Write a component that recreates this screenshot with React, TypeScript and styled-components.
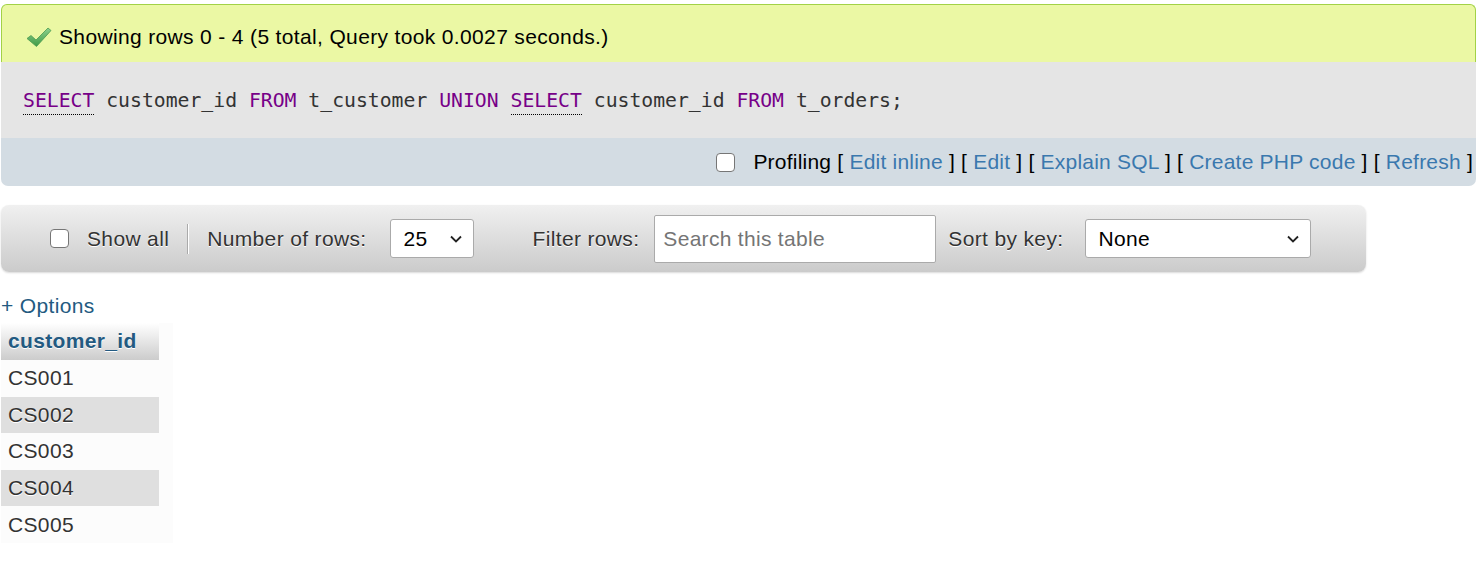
import React from "react";
import styled, { createGlobalStyle } from "styled-components";

const GlobalStyle = createGlobalStyle`
  html, body {
    margin: 0;
    padding: 0;
    background: #fff;
  }
  body {
    font-family: "Liberation Sans", Arial, sans-serif;
    font-size: 21px;
    letter-spacing: 0.35px;
    color: #000;
  }
`;

const Page = styled.div`
  padding: 4px 1px 0 1px;
`;

const ResultBlock = styled.div`
  width: 1475px;
`;

const SuccessBox = styled.div`
  box-sizing: border-box;
  height: 58px;
  display: flex;
  align-items: center;
  gap: 7px;
  padding: 7px 0 0 24px;
  background: #ebf8a4;
  border: 1px solid #a2d246;
  border-bottom: none;
  border-radius: 6px 6px 0 0;
`;

const SqlBox = styled.div`
  height: 76px;
  display: flex;
  align-items: center;
  padding-left: 22px;
  background: #e5e5e5;
  font-family: "DejaVu Sans Mono", "Liberation Mono", monospace;
  font-size: 19.75px;
  letter-spacing: 0;
  color: #333;
`;

const SqlText = styled.span`
  white-space: pre;
`;

const Keyword = styled.span<{ $doc?: boolean }>`
  color: #770088;
  ${(p) => (p.$doc ? "border-bottom: 1px dotted #000; padding-bottom: 2px;" : "")}
`;

const ToolsBar = styled.div`
  height: 48px;
  display: flex;
  align-items: center;
  justify-content: flex-end;
  padding-right: 3px;
  background: #d3dce3;
  border-radius: 0 0 7px 7px;
`;

const ToolsText = styled.span`
  margin-left: 18px;
  letter-spacing: 0.22px;
  white-space: pre;
`;

const Check = styled.input.attrs({ type: "checkbox" })`
  appearance: none;
  box-sizing: border-box;
  width: 19px;
  height: 19px;
  margin: 0;
  border: 1.5px solid #767676;
  border-radius: 4px;
  background: #fff;
  flex: none;
`;

const ToolLink = styled.a`
  color: #3a78ae;
  text-decoration: none;
`;

const NavBar = styled.div`
  box-sizing: border-box;
  width: 1365px;
  height: 67px;
  margin-top: 19px;
  display: flex;
  align-items: center;
  padding-left: 49px;
  background: linear-gradient(to bottom, #f0f0f0, #cbcbcb);
  border-radius: 8px;
  box-shadow: 0 1px 2px rgba(0, 0, 0, 0.15);
  color: #333;
`;

const NavLabel = styled.span<{ $ml?: number }>`
  margin-left: ${(p) => p.$ml ?? 0}px;
  text-shadow: 0 1px 0 #fff;
  white-space: pre;
`;

const Separator = styled.span`
  width: 2px;
  height: 30px;
  margin: 0 18px 0 18px;
  background: linear-gradient(to right, #aaa 50%, #fff 50%);
`;

const SelectBox = styled.div<{ $w: number; $ml: number }>`
  box-sizing: border-box;
  width: ${(p) => p.$w}px;
  height: 39px;
  margin-left: ${(p) => p.$ml}px;
  display: flex;
  align-items: center;
  justify-content: space-between;
  padding: 0 10px 0 12px;
  background: #fff;
  border: 1px solid #aaa;
  border-radius: 3px;
  color: #000;
`;

const SearchInput = styled.input`
  box-sizing: border-box;
  width: 282px;
  height: 48px;
  margin-left: 15px;
  padding: 0 8px;
  border: 1px solid #aaa;
  border-radius: 2px;
  background: #fff;
  font-family: "Liberation Sans", Arial, sans-serif;
  font-size: 21px;
  letter-spacing: 0.3px;
  &::placeholder {
    color: #757575;
  }
`;

const OptionsLink = styled.a`
  display: block;
  margin-top: 22px;
  line-height: 23px;
  color: #235a81;
  text-decoration: none;
`;

const TableWrap = styled.div`
  display: inline-block;
  margin-top: 6px;
  padding-right: 14px;
  background: #fcfcfc;
`;

const DataTable = styled.table`
  border-collapse: collapse;
  font-size: 21px;
`;

const HeadCell = styled.th`
  width: 158px;
  box-sizing: border-box;
  height: 37px;
  padding: 0 7px 1px;
  text-align: left;
  font-weight: bold;
  color: #235a81;
  text-shadow: 0 1px 0 #fff;
  background: linear-gradient(to bottom, #ffffff, #cccccc);
`;

const Row = styled.tr<{ $even: boolean }>`
  background: ${(p) => (p.$even ? "#dfdfdf" : "#fcfcfc")};
`;

const Cell = styled.td`
  height: 36.6px;
  padding: 0 7px;
  color: #333;
  text-shadow: 0 1px 0 #fff;
`;

const BottomNav = styled(NavBar)`
  margin-top: 26px;
`;

const Chevron = () => (
  <svg width="14" height="10" viewBox="0 0 14 10">
    <path d="M2 2.5 L7 7.5 L12 2.5" fill="none" stroke="#222" strokeWidth="1.8" />
  </svg>
);

const SuccessIcon = () => (
  <svg width="26" height="22" viewBox="0 0 26 22">
    <defs>
      <linearGradient id="chk" x1="0" y1="0" x2="0" y2="1">
        <stop offset="0" stopColor="#8fd18f" />
        <stop offset="1" stopColor="#3f9a45" />
      </linearGradient>
    </defs>
    <path
      d="M1 12.5 L5 9.5 L10 14 L22 2 L25 4.5 L10.5 20.5 Z"
      fill="url(#chk)"
      stroke="#4a9a4f"
      strokeWidth="0.8"
      strokeLinejoin="round"
    />
  </svg>
);

const rows = ["CS001", "CS002", "CS003", "CS004", "CS005"];

const NavControls = () => (
  <>
    <Check />
    <NavLabel $ml={18}>Show all</NavLabel>
    <Separator />
    <NavLabel>Number of rows:</NavLabel>
    <SelectBox $w={84} $ml={24}>
      <span>25</span>
      <Chevron />
    </SelectBox>
    <NavLabel $ml={58}>Filter rows:</NavLabel>
    <SearchInput placeholder="Search this table" />
    <NavLabel $ml={12}>Sort by key:</NavLabel>
    <SelectBox $w={226} $ml={22}>
      <span>None</span>
      <Chevron />
    </SelectBox>
  </>
);

export default function App() {
  return (
    <Page>
      <GlobalStyle />
      <ResultBlock>
        <SuccessBox>
          <SuccessIcon />
          <span>Showing rows 0 - 4 (5 total, Query took 0.0027 seconds.)</span>
        </SuccessBox>
        <SqlBox>
          <SqlText>
            <Keyword $doc>SELECT</Keyword>
            {" customer_id "}
            <Keyword>FROM</Keyword>
            {" t_customer "}
            <Keyword>UNION</Keyword>
            {" "}
            <Keyword $doc>SELECT</Keyword>
            {" customer_id "}
            <Keyword>FROM</Keyword>
            {" t_orders;"}
          </SqlText>
        </SqlBox>
        <ToolsBar>
          <Check />
          <ToolsText>
            {"Profiling [ "}
            <ToolLink href="#">Edit inline</ToolLink>
            {" ] [ "}
            <ToolLink href="#">Edit</ToolLink>
            {" ] [ "}
            <ToolLink href="#">Explain SQL</ToolLink>
            {" ] [ "}
            <ToolLink href="#">Create PHP code</ToolLink>
            {" ] [ "}
            <ToolLink href="#">Refresh</ToolLink>
            {" ]"}
          </ToolsText>
        </ToolsBar>
      </ResultBlock>

      <NavBar>
        <NavControls />
      </NavBar>

      <OptionsLink href="#">+ Options</OptionsLink>
      <TableWrap>
        <DataTable>
          <thead>
            <tr>
              <HeadCell>customer_id</HeadCell>
            </tr>
          </thead>
          <tbody>
            {rows.map((r, i) => (
              <Row key={r} $even={i % 2 === 1}>
                <Cell>{r}</Cell>
              </Row>
            ))}
          </tbody>
        </DataTable>
      </TableWrap>

      <BottomNav>
        <NavControls />
      </BottomNav>
    </Page>
  );
}
